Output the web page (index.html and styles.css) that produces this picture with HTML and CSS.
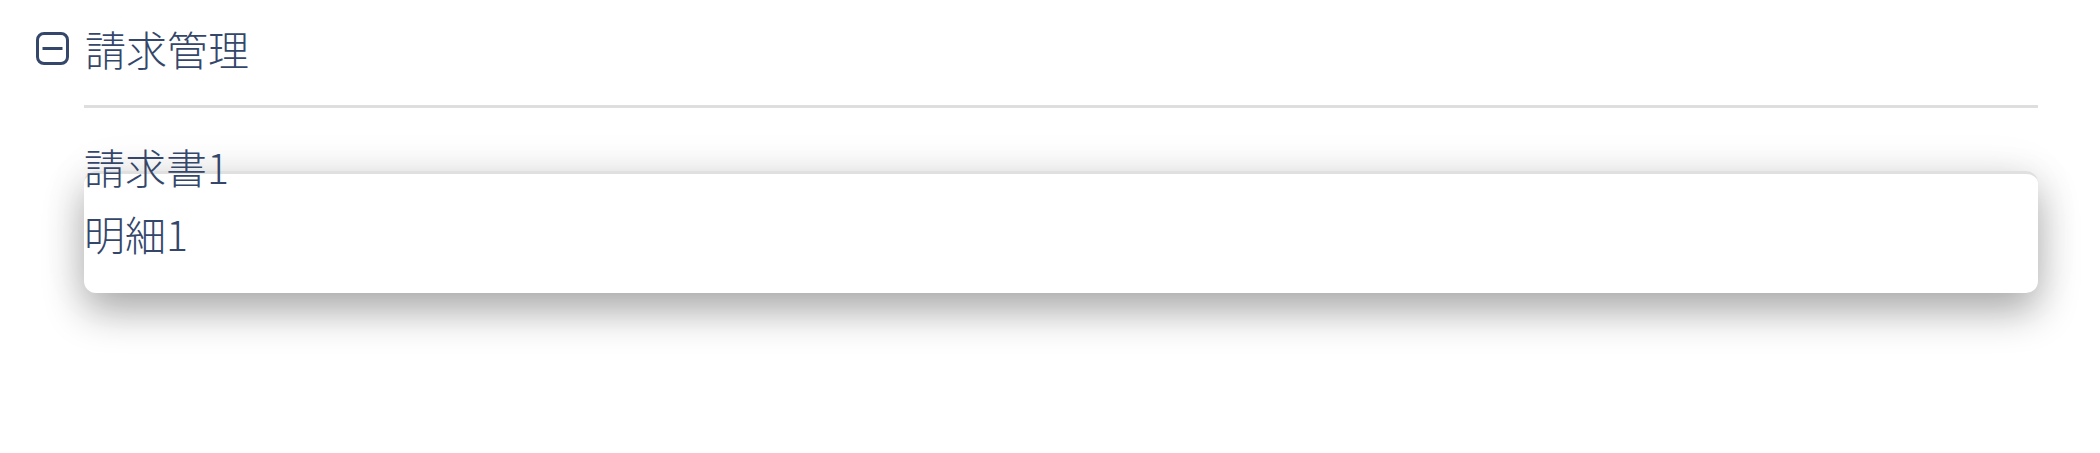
FILE: index.html
```html
<!DOCTYPE html>
<html lang="ja">
<head>
<meta charset="utf-8">
<link rel="stylesheet" href="styles.css">
</head>
<body>
<div class="tree">
  <div class="node-head">
    <svg class="toggle" width="33" height="33" viewBox="0 0 33 33" aria-hidden="true">
      <rect x="1.5" y="1.5" width="30" height="30" rx="6.5" ry="6.5" fill="none" stroke="#34476b" stroke-width="3"/>
      <line x1="6.5" y1="16.5" x2="26.5" y2="16.5" stroke="#34476b" stroke-width="3"/>
    </svg>
    <span class="label">請求管理</span>
  </div>
  <div class="children">
    <div class="divider"></div>
    <div class="child-wrap">
      <div class="child">請求書1</div>
      <div class="menu">
        <div class="menu-item">明細1</div>
      </div>
    </div>
  </div>
</div>
</body>
</html>
```
FILE: styles.css
```css
html, body {
  margin: 0;
  padding: 0;
  background: #ffffff;
}
body {
  font-family: "Noto Sans CJK JP", "Noto Sans", sans-serif;
  font-weight: 300;
  color: #34476b;
  width: 2100px;
  height: 453px;
  overflow: hidden;
}
.tree {
  padding: 24px 62px 0 36px;
}
.node-head {
  display: flex;
  align-items: center;
  gap: 16px;
  height: 48px;
}
.toggle {
  display: block;
  flex: none;
  margin-top: 1px;
}
.label {
  font-size: 41px;
  line-height: 48px;
}
.children {
  margin-left: 48px;
  padding-top: 33px;
}
.divider {
  height: 3px;
  background: #dedede;
}
.child-wrap {
  position: relative;
  padding-top: 34px;
}
.child {
  position: relative;
  z-index: 2;
  font-size: 41px;
  line-height: 48px;
}
.menu {
  position: absolute;
  z-index: 1;
  left: 0;
  right: 0;
  top: 63px;
  background: #ffffff;
  border-top: 3px solid #e0e0e0;
  border-radius: 12px;
  box-shadow: 0 0 50px rgba(0, 0, 0, 0.06), 0 18px 40px rgba(0, 0, 0, 0.32);
  padding: 35px 0 36px;
}
.menu-item {
  font-size: 41px;
  line-height: 48px;
}
```
